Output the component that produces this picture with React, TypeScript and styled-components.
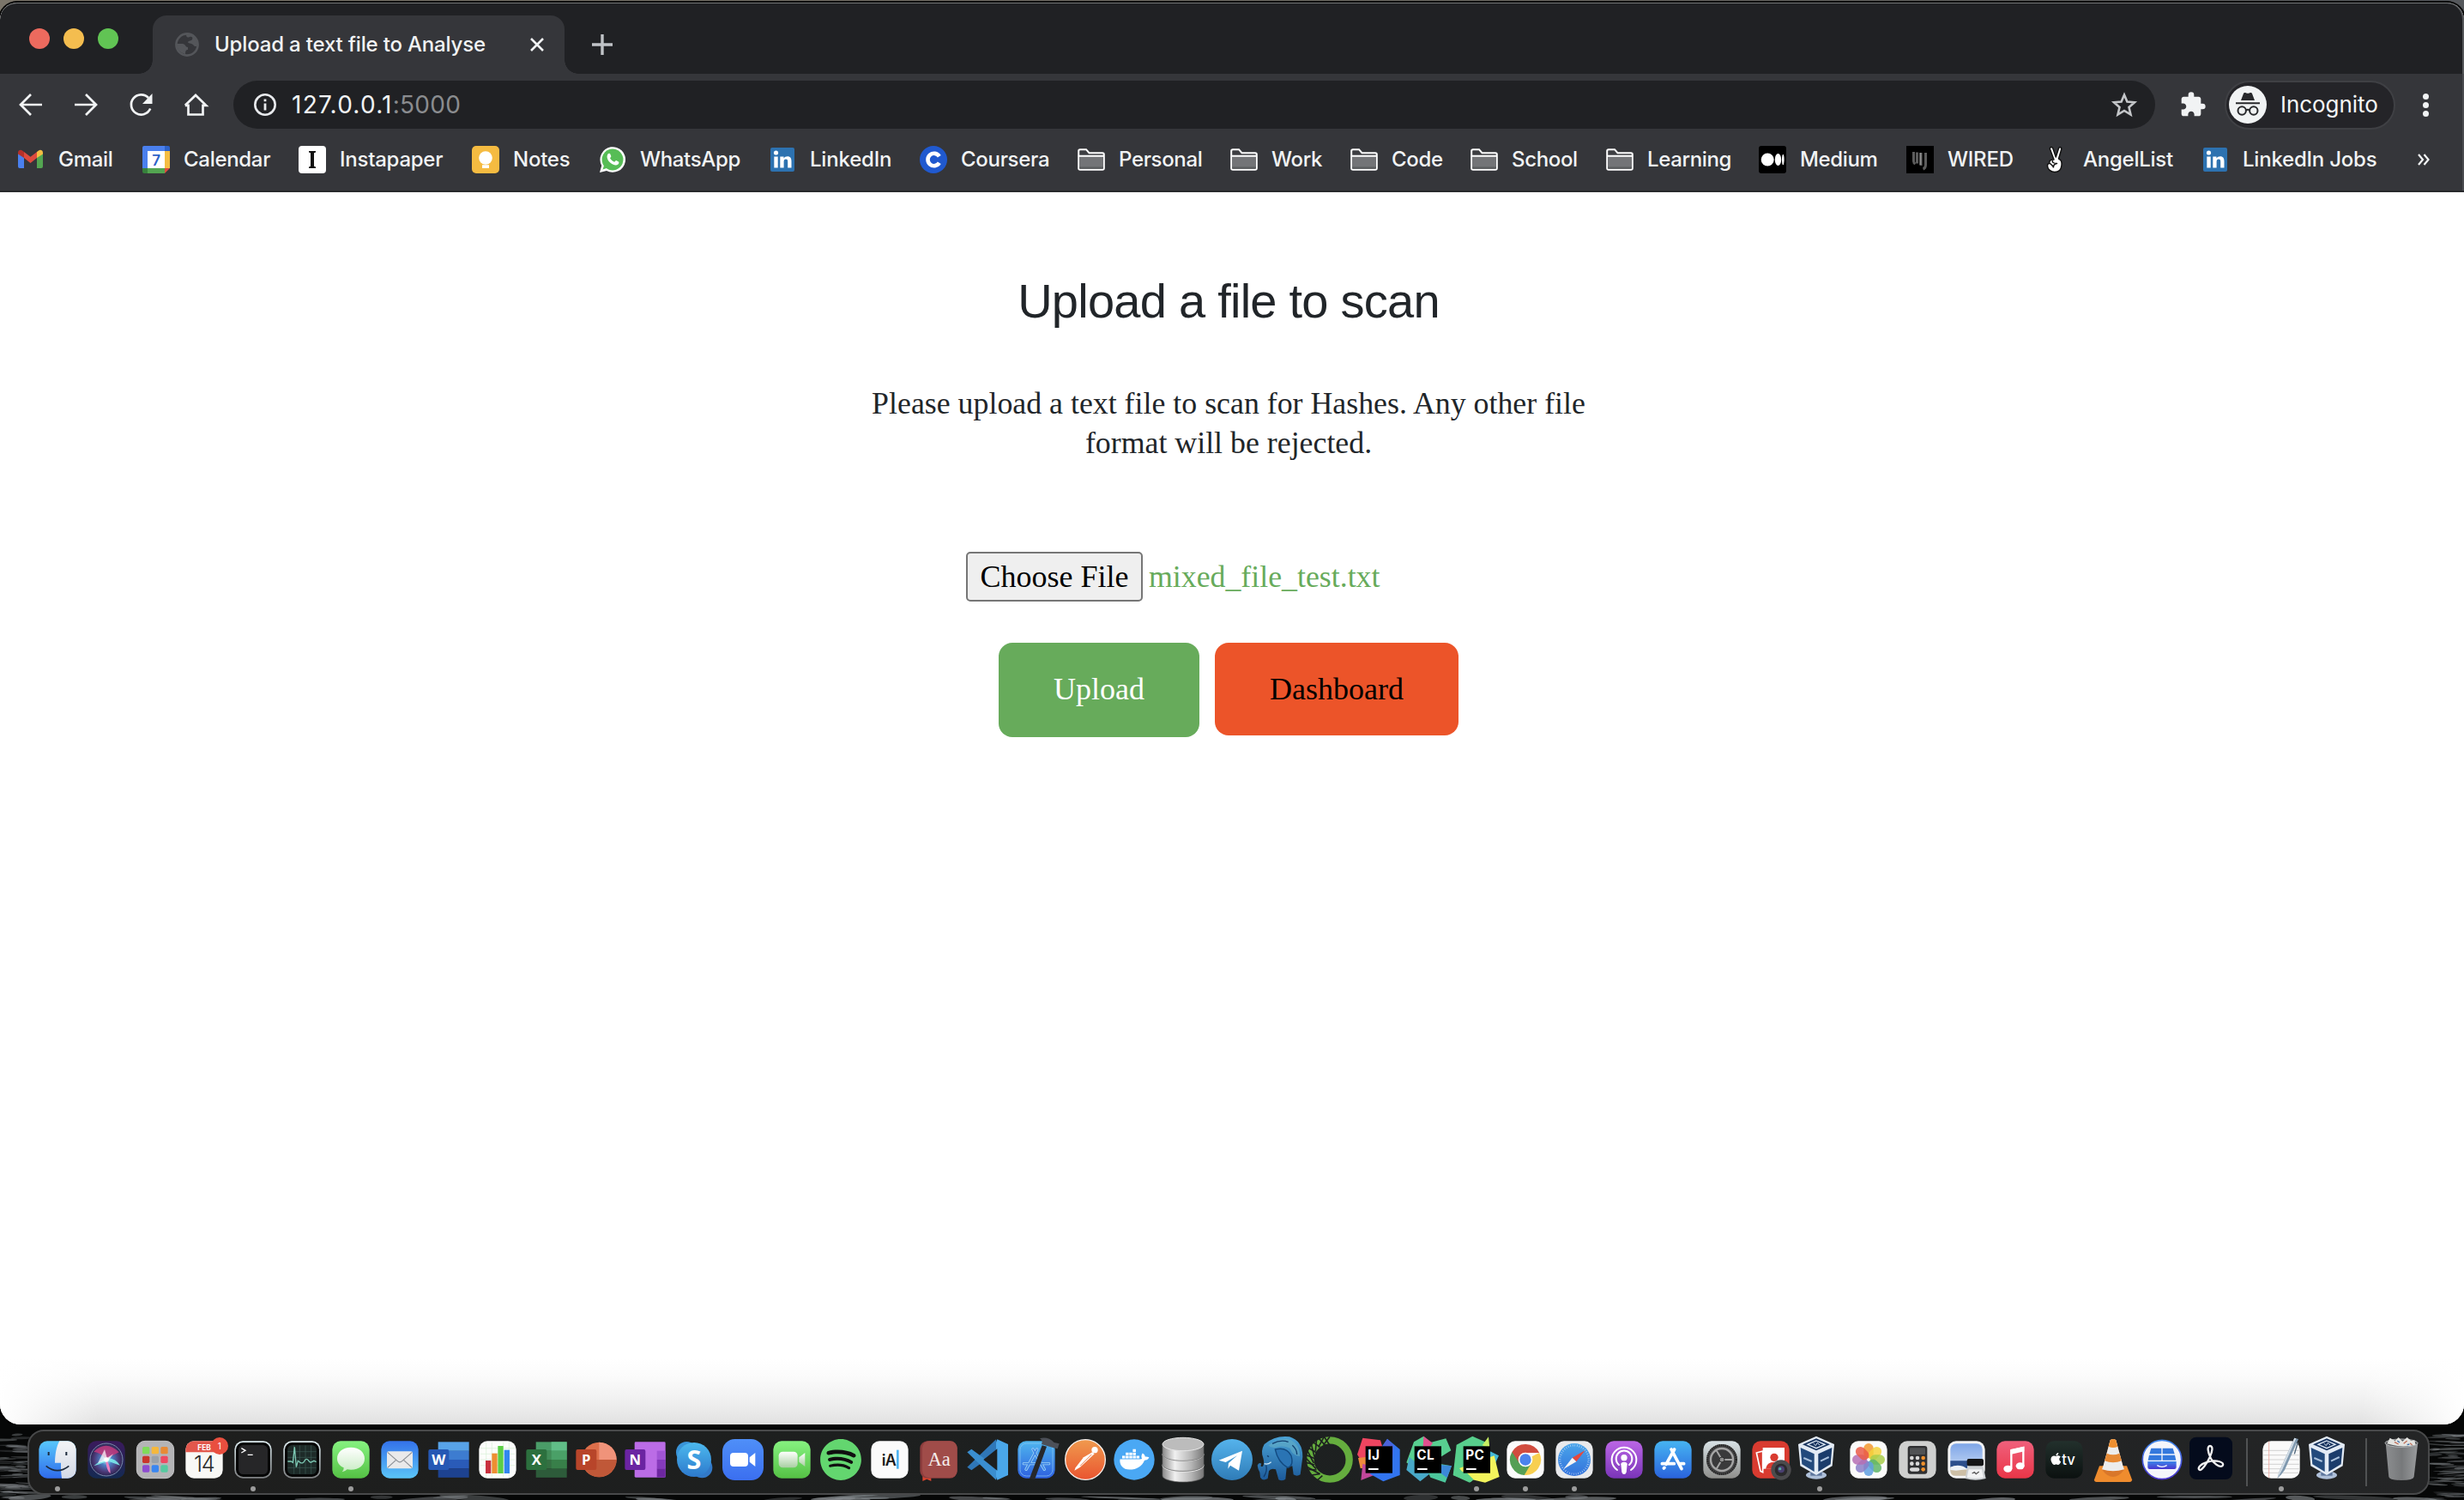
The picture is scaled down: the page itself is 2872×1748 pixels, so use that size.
import React from 'react';
import styled, { createGlobalStyle } from 'styled-components';
import { FaApple, FaDocker, FaSpotify } from 'react-icons/fa';

const GlobalStyle = createGlobalStyle`
  * { box-sizing: border-box; }
  html, body { margin: 0; padding: 0; background: #060707; }
  body { width: 2872px; height: 1748px; overflow: hidden; }
`;

const UI = `Inter, "Liberation Sans", sans-serif`;
const SERIF = `"Liberation Serif", "Times New Roman", serif`;

/* ------------------------------------------------------------------ */
/* Layout                                                              */
/* ------------------------------------------------------------------ */

const Desktop = styled.div`
  position: relative;
  isolation: isolate;
  width: 2872px;
  height: 1748px;
  padding-top: 3px;
  display: flex;
  flex-direction: column;
  overflow: hidden;
  background: linear-gradient(90deg, #7b756a, #6d6a63 60%, #55585c) 0 0 / 100% 40px no-repeat, #060707;
`;

const Window = styled.div`
  height: 1657px;
  flex: none;
  display: flex;
  flex-direction: column;
  border-radius: 20px 20px 24px 24px;
  overflow: hidden;
  background: #fff;
  box-shadow: 0 0 0 2px #000;
`;

const TabStrip = styled.div`
  height: 83px;
  flex: none;
  display: flex;
  align-items: flex-end;
  background: #202124;
  border-radius: 20px 20px 0 0;
  box-shadow: inset 0 2px 0 -1px #77797b, inset -2px 0 0 #55575a;
`;

const Lights = styled.div`
  display: flex;
  gap: 16px;
  width: 178px;
  padding-left: 34px;
  padding-bottom: 29px;
`;

const Light = styled.span<{ $color: string }>`
  width: 24px;
  height: 24px;
  border-radius: 50%;
  background: ${(p) => p.$color};
`;

const Tab = styled.div`
  position: relative;
  width: 480px;
  height: 68px;
  padding: 0 24px 0 26px;
  display: flex;
  align-items: center;
  background: #35363a;
  border-radius: 16px 16px 0 0;
  &::before,
  &::after {
    content: '';
    position: absolute;
    bottom: 0;
    width: 16px;
    height: 16px;
  }
  &::before {
    left: -16px;
    background: radial-gradient(circle at 0 0, transparent 15.5px, #35363a 16px);
  }
  &::after {
    right: -16px;
    background: radial-gradient(circle at 100% 0, transparent 15.5px, #35363a 16px);
  }
`;

const TabTitle = styled.span`
  flex: 1;
  margin-left: 18px;
  font: 500 24px/32px ${UI};
  letter-spacing: -0.17px;
  color: #f1f3f4;
  white-space: nowrap;
`;

const NewTab = styled.div`
  height: 68px;
  padding-left: 32px;
  display: flex;
  align-items: center;
`;

const Toolbar = styled.div`
  height: 72px;
  flex: none;
  display: flex;
  align-items: center;
  padding-left: 18px;
  background: #35363a;
  box-shadow: inset -2px 0 0 #4b4c50;
`;

const NavButtons = styled.div`
  display: flex;
  gap: 28px;
  width: 254px;
`;

const AddressBar = styled.div`
  width: 2240px;
  height: 56px;
  padding: 0 20px 0 24px;
  display: flex;
  align-items: center;
  border-radius: 28px;
  background: #202124;
`;

const Url = styled.span`
  flex: 1;
  margin-left: 18px;
  font: 400 28px/36px ${UI};
  letter-spacing: 1.25px;
  color: #f1f3f4;
`;

const Port = styled.span`
  letter-spacing: 0.25px;
  color: #8a8c8f;
`;

const Extensions = styled.div`
  width: 81px;
  padding-left: 28px;
  display: flex;
`;

const Incognito = styled.div`
  width: 199px;
  height: 57px;
  padding-left: 3px;
  display: flex;
  align-items: center;
  border: 2px solid #3f4044;
  border-radius: 29px;
  background: #242428;
  font: 400 26px/34px ${UI};
  letter-spacing: -0.05px;
  color: #f5f6f7;
  svg { margin-right: 16px; }
`;

const Menu = styled.div`
  margin-left: 32px;
  display: flex;
  flex-direction: column;
  gap: 3px;
`;

const MenuDot = styled.span`
  width: 7px;
  height: 7px;
  border-radius: 50%;
  background: #f1f3f4;
`;

const Bookmarks = styled.div`
  height: 66px;
  flex: none;
  padding: 0 0 8px 20px;
  display: flex;
  align-items: center;
  background: #35363a;
  border-bottom: 2px solid #28292c;
  box-shadow: inset -2px 0 0 #4b4c50;
`;

const Bookmark = styled.div<{ $width: number; $track: number }>`
  width: ${(p) => p.$width}px;
  flex: none;
  display: flex;
  align-items: center;
  gap: 16px;
  font: 500 24px/32px ${UI};
  letter-spacing: ${(p) => p.$track}px;
  color: #f1f3f4;
  white-space: nowrap;
`;

const Page = styled.main`
  flex: 1;
  padding: 93px 8px 0 0;
  display: flex;
  flex-direction: column;
  align-items: center;
  background:
    linear-gradient(90deg, #fff, rgba(255, 255, 255, 0) 120px, rgba(255, 255, 255, 0) calc(100% - 120px), #fff),
    linear-gradient(#fff calc(100% - 76px), #fbfbfb calc(100% - 56px), #f1f1f1 calc(100% - 30px), #e1e1e1);
  color: #212529;
`;

const Heading = styled.h1`
  margin: 0 0 62px;
  font: 400 56px/68px 'Liberation Sans', Arial, sans-serif;
  letter-spacing: -0.75px;
`;

const Lead = styled.p`
  margin: 0 0 104px;
  width: 850px;
  text-align: center;
  font: 400 35.850px/46px ${SERIF};
`;

const FileRow = styled.div`
  width: 612px;
  margin-bottom: 48px;
  display: flex;
  align-items: center;
  gap: 7px;
  font: 400 35.800px/42px ${SERIF};
  color: #67ab5b;
`;

const ChooseFile = styled.button`
  width: 206px;
  height: 58px;
  padding: 0;
  border: 2px solid #767676;
  border-radius: 5px;
  background: #efefef;
  color: #000;
  font: 400 36px/42px ${SERIF};
  white-space: nowrap;
`;

const Actions = styled.div`
  display: flex;
  align-items: flex-start;
  gap: 18px;
`;

const Action = styled.button<{ $bg: string; $fg: string; $w: number; $h: number }>`
  width: ${(p) => p.$w}px;
  height: ${(p) => p.$h}px;
  padding: 33px 0 0;
  display: flex;
  align-items: flex-start;
  justify-content: center;
  border: 0;
  border-radius: 16px;
  background: ${(p) => p.$bg};
  color: ${(p) => p.$fg};
  font: 400 36px/42px ${SERIF};
`;

const DockStrip = styled.footer`
  position: relative;
  height: 88px;
  padding: 6px 0 0 32px;
`;

const Waves = styled.svg`
  position: absolute;
  left: 0;
  top: -24px;
  z-index: -1;
`;

const Dock = styled.div`
  position: relative;
  width: 2800px;
  height: 76px;
  padding-left: 4.500px;
  display: flex;
  border: 2px solid #48494a;
  border-radius: 19px;
  background: linear-gradient(90deg, #1e1e1d, #1d2020 50%, #242526);
`;

const DockCell = styled.div`
  width: 57.050px;
  flex: none;
  display: flex;
  flex-direction: column;
  align-items: center;
  padding-top: 6px;
  svg { overflow: visible; flex: none; }
`;

const Running = styled.span`
  width: 6px;
  height: 6px;
  margin-top: 4px;
  border-radius: 50%;
  background: #9c9c9c;
`;

const Separator = styled.div`
  width: 2px;
  height: 56px;
  margin: 8px 10.900px 0 12.400px;
  flex: none;
  background: #505253;
`;

/* ------------------------------------------------------------------ */
/* Toolbar and bookmark icons                                          */
/* ------------------------------------------------------------------ */

const Globe = () => (
  <svg width="28" height="28" viewBox="0 0 28 28">
    <circle cx="14" cy="14" r="12.600" fill="none" stroke="#54565a" strokeWidth="2.600" />
    <path d="M2 13h7c3 0 3 4 6 4v3c-2 0-3 1-3 5-6-1-10-6-10-12zM13 2c0 4 2 4 4 3 3-1 4 1 3 3-1 2-4 1-5 3 0 2 4 1 6 3 1 2 4 3 5 1 1-7-4-13-13-13z" fill="#54565a" />
  </svg>
);

const NavIcon = ({ children }: { children: React.ReactNode }) => (
  <svg width="36" height="36" viewBox="0 0 36 36" fill="none" stroke="#f1f3f4" strokeWidth="2.700">
    {children}
  </svg>
);

const Folder = () => (
  <svg width="32" height="26" viewBox="0 0 32 26">
    <path d="M1.200 22V3q0-1.800 1.800-1.800h7l3.500 4H29q1.800 0 1.800 1.800v16q0 1.800-1.800 1.800H3q-1.800 0-1.800-1.800z" fill="#3d3e42" stroke="#fff" strokeWidth="2" />
    <path d="M2 9h28v13H2z" fill="#737477" />
    <path d="M2 21.500h28v2H2z" fill="#5b5c5f" />
    <path d="M2 8.700h28" stroke="#fff" strokeWidth="2" />
  </svg>
);

const LinkedIn = () => (
  <svg width="32" height="32" viewBox="0 0 32 32">
    <rect x="2" y="2" width="28" height="28" rx="2" fill="#2d72b0" />
    <circle cx="8.500" cy="8" r="2.600" fill="#fff" />
    <path d="M6.300 12.500h4.400v13H6.300zM13.300 12.500h4.200v1.900c1-1.500 2.500-2.200 4.300-2.200 3.600 0 4.700 2.200 4.700 5.800v7.500h-4.300v-7c0-1.700-.4-3-2.200-3-1.700 0-2.400 1.200-2.400 3v7h-4.300z" fill="#fff" />
  </svg>
);

const Gmail = () => (
  <svg width="32" height="32" viewBox="0 0 32 32">
    <path d="M1 8v16q0 2 2 2h5V13z" fill="#4a80ee" />
    <path d="M30 8v16q0 2-2 2h-5V13z" fill="#53a551" />
    <path d="M8 14V7l7.500 5.800L23 7v7l-7.500 6z" fill="#dd4b3e" />
    <path d="M1 8c0-3 3-4 5-2.600L8 7v7L1 9.500z" fill="#b5312a" />
    <path d="M30 8c0-3-3-4-5-2.600L23 7v7l7-4.500z" fill="#f4bd42" />
  </svg>
);

const GCalendar = () => (
  <svg width="32" height="32" viewBox="0 0 32 32">
    <path d="M2 0h24v6H6v20H0V2q0-2 2-2z" fill="#4a80ee" />
    <path d="M26 0h4q2 0 2 2v4h-6z" fill="#2d62c8" />
    <path d="M26 6h6v20h-6z" fill="#f4bd42" />
    <path d="M6 26h20v6H6z" fill="#53a551" />
    <path d="M0 26h6v6H2q-2 0-2-2z" fill="#37813c" />
    <path d="M26 26h6l-6 6z" fill="#dd4b3e" />
    <path d="M6 6h20v20H6z" fill="#fff" />
    <text x="16" y="22.500" textAnchor="middle" fontFamily={UI} fontSize="17" fontWeight="600" fill="#2d62c8">7</text>
  </svg>
);

const Instapaper = () => (
  <svg width="32" height="32" viewBox="0 0 32 32">
    <rect width="32" height="32" rx="4" fill="#fff" />
    <path d="M12 6h8v1.500l-2 .7v15.600l2 .7V26h-8v-1.500l2-.7V8.200l-2-.7z" fill="#111" />
  </svg>
);

const Keep = () => (
  <svg width="32" height="32" viewBox="0 0 32 32">
    <rect width="32" height="32" rx="5" fill="#f5bb41" />
    <circle cx="16" cy="14" r="7.800" fill="#fff" />
    <path d="M12 17h8v3.500h-8zM12 22.300h8V26h-8z" fill="#fff" />
  </svg>
);

const WhatsApp = () => (
  <svg width="32" height="32" viewBox="0 0 32 32">
    <path d="M1 31l2.200-8A14.800 14.800 0 1 1 9 28.900z" fill="#fff" />
    <circle cx="16" cy="16" r="12.400" fill="#57bd56" />
    <path d="M4.500 27.500l2-6 4 4z" fill="#57bd56" />
    <path d="M10.500 9.500c1-1.200 2.400-1 2.800 0l1 2.500c.2.800-.9 1.600-1.300 2.200 1.300 2.300 3 3.800 5.200 4.600.7-.5 1.300-1.900 2.100-1.700l2.700 1.300c.8.500.3 2.400-.6 3.200-2.200 1.900-5.500.9-8.600-1.500-2.900-2.400-5.700-6.900-3.300-10.600z" fill="#fff" />
  </svg>
);

const Coursera = () => (
  <svg width="32" height="32" viewBox="0 0 32 32">
    <circle cx="16" cy="16" r="16" fill="#2059cf" />
    <path d="M22.800 12.200A7.200 7.200 0 1 0 22.800 19.800" fill="none" stroke="#fff" strokeWidth="4.600" />
  </svg>
);

const Medium = () => (
  <svg width="32" height="32" viewBox="0 0 32 32">
    <rect width="32" height="32" rx="3" fill="#000" />
    <circle cx="10.200" cy="16" r="7.500" fill="#fff" />
    <ellipse cx="22.500" cy="16" rx="3.700" ry="7" fill="#fff" />
    <ellipse cx="28.300" cy="16" rx="1.300" ry="6.300" fill="#fff" />
  </svg>
);

const Wired = () => (
  <svg width="32" height="32" viewBox="0 0 32 32">
    <rect width="32" height="32" fill="#000" />
    <path d="M8.500 7v11q0 2 2 3M12.500 7.500v13M17 8v15M22.500 8v14q0 4-3 5" fill="none" stroke="#5c5c5c" strokeWidth="3" />
    <path d="M16.500 8v14" stroke="#8c8c8c" strokeWidth="2" />
  </svg>
);

const AngelList = () => (
  <svg width="32" height="32" viewBox="0 0 32 32" fill="#fff" stroke="#111" strokeWidth="1.500" strokeLinejoin="round">
    <path d="M14 16L9.500 4c-.8-2.600 2.400-3.600 3.400-1l3.400 10L19.500 3c.8-2.400 4-1.500 3.200 1.200L19.500 15c3 1 4 3.500 3.500 7.500-.5 5-3.500 8-8 8S6.500 27 6.500 23.500c0-2 1-3.500 2.500-3-1-2 .5-5 5-4.500z" />
    <path d="M9 20.500c2 0 3 3 4.500 4M12.500 17c-1 2 1 3.500 5 3.500-3 .5-4.500 2.500-4 5" fill="none" />
  </svg>
);

const IncognitoIcon = () => (
  <svg width="44" height="44" viewBox="0 0 44 44">
    <circle cx="22" cy="22" r="22" fill="#f1f3f4" />
    <path d="M14 17l3-8q.6-1.500 2.200-.9l1.800.6q1 .3 2 0l1.800-.6q1.600-.6 2.200.9l3 8z" fill="#28292c" />
    <path d="M8 20.200h28" stroke="#28292c" strokeWidth="2" />
    <g fill="none" stroke="#28292c" strokeWidth="2">
      <circle cx="15.200" cy="29" r="4.700" />
      <circle cx="28.800" cy="29" r="4.700" />
      <path d="M19.900 28.500q2.100-1.500 4.200 0" />
    </g>
  </svg>
);

const bookmarks: { label: string; w: number; track: number; icon: React.ReactNode }[] = [
  { label: 'Gmail', w: 146, track: -0.3, icon: <Gmail /> },
  { label: 'Calendar', w: 182, track: -0.3, icon: <GCalendar /> },
  { label: 'Instapaper', w: 202, track: -0.25, icon: <Instapaper /> },
  { label: 'Notes', w: 148, track: -0.25, icon: <Keep /> },
  { label: 'WhatsApp', w: 198, track: -0.35, icon: <WhatsApp /> },
  { label: 'LinkedIn', w: 176, track: -0.2, icon: <LinkedIn /> },
  { label: 'Coursera', w: 184, track: -0.3, icon: <Coursera /> },
  { label: 'Personal', w: 178, track: -0.35, icon: <Folder /> },
  { label: 'Work', w: 140, track: -0.35, icon: <Folder /> },
  { label: 'Code', w: 140, track: -0.35, icon: <Folder /> },
  { label: 'School', w: 158, track: -0.35, icon: <Folder /> },
  { label: 'Learning', w: 178, track: -0.35, icon: <Folder /> },
  { label: 'Medium', w: 172, track: -0.35, icon: <Medium /> },
  { label: 'WIRED', w: 158, track: -0.25, icon: <Wired /> },
  { label: 'AngelList', w: 186, track: -0.25, icon: <AngelList /> },
  { label: 'LinkedIn Jobs', w: 252, track: -0.22, icon: <LinkedIn /> },
];

/* ------------------------------------------------------------------ */
/* Dock icons: every drawing is centred on 0,0 in a 162-unit box       */
/* ------------------------------------------------------------------ */

const Tile = ({ fill, stroke }: { fill: string; stroke?: string }) => (
  <rect x="-65" y="-65" width="130" height="130" rx="29" fill={fill} stroke={stroke} strokeWidth={stroke ? 3 : 0} />
);

const Grad = ({ id, a, b, h }: { id: string; a: string; b: string; h?: boolean }) => (
  <linearGradient id={id} x1="0" y1="0" x2={h ? 1 : 0} y2={h ? 0 : 1}>
    <stop offset="0" stopColor={a} />
    <stop offset="1" stopColor={b} />
  </linearGradient>
);

const Finder = (
  <>
    <Grad id="fi" a="#58c8fb" b="#2f6bec" />
    <Grad id="fr" a="#f3f4f6" b="#d3d9e6" />
    <Tile fill="url(#fi)" />
    <path d="M7-65H36a29 29 0 0 1 29 29V36a29 29 0 0 1-29 29H15C12 45 12 30 12 11H-9C-8-20-4-45 7-65z" fill="url(#fr)" />
    <path d="M-31-27v12M31-27v12" stroke="#1d2a3c" strokeWidth="6" />
    <path d="M-40 22Q0 54 40 22" fill="none" stroke="#1d2a3c" strokeWidth="5" />
  </>
);

const Siri = (
  <>
    <Grad id="si" a="#3a1a5c" b="#142a52" />
    <radialGradient id="so">
      <stop offset="0" stopColor="#c8fff8" />
      <stop offset=".35" stopColor="#4b7fc4" />
      <stop offset=".75" stopColor="#4c3a78" />
      <stop offset="1" stopColor="#2a2450" />
    </radialGradient>
    <Tile fill="url(#si)" />
    <circle r="57" fill="url(#so)" stroke="#7d8db0" strokeWidth="3" />
    <path d="M-44-28Q0-70 44-26Q20-14 0-2Q-20-24-44-28z" fill="#c23a7c" opacity=".85" />
    <path d="M-44 22Q-24 4 0-4Q30-8 48 20Q22 12 4 4Q-4 10-44 22z" fill="#7ff2f0" opacity=".85" />
    <path d="M0 0Q14 20 14 48Q2 40-2 8z" fill="#ee7fc0" />
    <circle r="8" fill="#fff" />
    <path d="M-6-36L2-6L24-20L8 2L-30 12z" fill="#fff" opacity=".7" />
  </>
);

const launchColors = ['#7fdc5a', '#f5b83d', '#e88b35', '#c9362c', '#9aa1a8', '#ee4a62', '#8d4bd0', '#3a86f0', '#56c9a0'];
const Launchpad = (
  <>
    <Tile fill="#b4b4b6" stroke="#c6c6c8" />
    {launchColors.map((c, i) => (
      <rect key={c} x={-45 + (i % 3) * 32} y={-45 + Math.floor(i / 3) * 32} width="25" height="25" rx="5" fill={c} />
    ))}
  </>
);

const Calendar = (
  <>
    <Tile fill="#f8f8f5" />
    <path d="M-65-26v-10a29 29 0 0 1 29-29h72a29 29 0 0 1 29 29v10z" fill="#e2574c" />
    <text x="0" y="-34" textAnchor="middle" fontFamily={UI} fontWeight="700" fontSize="25" fill="#fff">FEB</text>
    <text x="-1" y="43" textAnchor="middle" fontFamily={UI} fontWeight="300" fontSize="76" letterSpacing="-4" fill="#2a2a2a">14</text>
    <circle cx="54" cy="-48" r="30" fill="#e94f3f" />
    <text x="53" y="-37" textAnchor="middle" fontFamily={UI} fontSize="30" fill="#fff">1</text>
  </>
);

const Terminal = (
  <>
    <Grad id="te" a="#dfeef2" b="#7d8082" />
    <Tile fill="url(#te)" />
    <rect x="-60" y="-60" width="120" height="120" rx="25" fill="#050505" />
    <rect x="-51" y="-51" width="102" height="102" rx="16" fill="#262628" />
    <path d="M-41-40l14 8-14 8M-19-17h18" fill="none" stroke="#fff" strokeWidth="4" />
  </>
);

const Activity = (
  <>
    <Tile fill="url(#te)" />
    <rect x="-60" y="-60" width="120" height="120" rx="25" fill="#050505" />
    <rect x="-51" y="-51" width="102" height="102" rx="16" fill="#1d2a28" />
    <path d="M-28-50V50M-8-50V50M12-50V50M32-50V50M-50-28H50M-50-8H50M-50 28H50" stroke="#3d5a55" strokeWidth="2" />
    <path d="M-50 6h12l6 4 6-54 6 70 6-22 8 6q10 6 16-8 6-8 12 0 6 10 12 6l8-4 8 4" fill="none" stroke="#7cc7b2" strokeWidth="4" />
  </>
);

const Messages = (
  <>
    <Grad id="me" a="#86f280" b="#55c145" />
    <Grad id="mb" a="#ffffff" b="#c9ecc4" />
    <Tile fill="url(#me)" />
    <path d="M0-43c30 0 48 17 48 39S30 35 0 35q-8 0-13-1-8 8-18 9 7-6 6-15C-40 21-48 10-48-4c0-22 18-39 48-39z" fill="url(#mb)" />
  </>
);

const Mail = (
  <>
    <Grad id="ma" a="#3472ea" b="#5bc5f8" />
    <Tile fill="url(#ma)" />
    <rect x="-45" y="-29" width="90" height="60" rx="6" fill="#e9e9ea" />
    <path d="M-43-26L-8 5q8 7 16 0L43-26M-43 28L-14 2M43 28L14 2" fill="none" stroke="#8b8f95" strokeWidth="3.500" />
  </>
);

const OfficeTab = ({ letter, fill }: { letter: string; fill: string }) => (
  <>
    <rect x="-71" y="-36" width="72" height="72" rx="6" fill={fill} />
    <text x="-35" y="19" textAnchor="middle" fontFamily='"Open Sans", sans-serif' fontWeight="700" fontSize="50" fill="#fff">{letter}</text>
  </>
);

const Bands = ({ colors }: { colors: string[] }) => (
  <>
    {colors.map((c, i) => (
      <rect key={c} x="-37" y={-62 + i * 31} width="108" height="31.500" fill={c} />
    ))}
  </>
);

const Word = (
  <>
    <Bands colors={['#58a3e8', '#3d7cd0', '#2a5bb8', '#1d4290']} />
    <OfficeTab letter="W" fill="#2558b4" />
  </>
);

const Numbers = (
  <>
    <Tile fill="#fcfdfb" />
    <path d="M-40-60V60M-20-60V60M20-60V60M40-60V60M-60-40H60M-60-20H60M-60 0H60M-60 20H60" stroke="#d8f0d6" strokeWidth="2" />
    <rect x="-42" y="3" width="19" height="45" fill="#c9313f" />
    <rect x="-20" y="-22" width="19" height="70" fill="#ed8f32" />
    <rect x="1" y="-48" width="19" height="96" fill="#5bcf46" />
    <rect x="23" y="-34" width="19" height="82" fill="#3288ee" />
  </>
);

const Excel = (
  <>
    <Bands colors={['#4a9c68', '#418b57', '#356f42', '#2d5b3a']} />
    <path d="M17-62H71V-31H17z" fill="#61bd88" />
    <path d="M17-31H71V0H17z" fill="#4aa067" />
    <path d="M17 0H71V31H17z" fill="#387f49" />
    <OfficeTab letter="X" fill="#2c703e" />
  </>
);

const PowerPoint = (
  <>
    <circle cx="10" r="61" fill="#dd6f4b" />
    <path d="M10 0V-61A61 61 0 0 1 71 0z" fill="#f0937a" />
    <path d="M71 0A61 61 0 0 1-51 0z" fill="#c05838" />
    <OfficeTab letter="P" fill="#b8452a" />
  </>
);

const OneNote = (
  <>
    <rect x="-37" y="-62" width="108" height="124" rx="4" fill="#bb6ce6" />
    <path d="M41-31H71V0H41z" fill="#a154d4" />
    <path d="M41 0H71V31H41z" fill="#853abb" />
    <path d="M41 31H71V62H41z" fill="#6d27a0" />
    <OfficeTab letter="N" fill="#6b24a2" />
  </>
);

const Skype = (
  <>
    <Grad id="sk" a="#4cb9ee" b="#2d79cc" />
    <circle cx="-26" cy="-26" r="37" fill="#3994d8" />
    <circle cx="28" cy="28" r="36" fill="#3279c8" />
    <circle r="60" fill="url(#sk)" />
    <text x="0" y="33" textAnchor="middle" fontFamily='"Open Sans", sans-serif' fontWeight="700" fontSize="92" fill="#fff">S</text>
  </>
);

const Zoom = (
  <>
    <Grad id="zo" a="#4f8ff8" b="#3b6ff0" />
    <rect x="-72" y="-72" width="144" height="144" rx="44" fill="url(#zo)" />
    <rect x="-45" y="-24" width="63" height="48" rx="12" fill="#fff" />
    <path d="M23-8L43-24V24L23 8z" fill="#fff" />
  </>
);

const FaceTime = (
  <>
    <Grad id="fc" a="#fdfffc" b="#a9cfa2" />
    <Tile fill="url(#me)" />
    <rect x="-46" y="-28" width="66" height="56" rx="14" fill="url(#fc)" />
    <path d="M25-8L46-24V24L25 8z" fill="url(#fc)" />
  </>
);

const Spotify = (
  <>
    <circle r="68" fill="#101010" />
    <FaSpotify x={-74} y={-74} size={148} color="#63d66f" />
  </>
);

const IaWriter = (
  <>
    <Tile fill="#fbfbfb" />
    <text x="-28" y="20" fontFamily={UI} fontWeight="600" fontSize="54" letterSpacing="-2" fill="#1a1a1a">iA</text>
    <rect x="24" y="-34" width="8" height="66" fill="#4fb4f2" />
  </>
);

const Dictionary = (
  <>
    <path d="M-56 60h30v15l-15-7-15 7z" fill="#d9442f" />
    <rect x="-65" y="-65" width="130" height="130" rx="26" fill="#8e3d3d" />
    <rect x="-57" y="-65" width="122" height="128" rx="24" fill="#a04c49" />
    <text x="2" y="20" textAnchor="middle" fontFamily={SERIF} fontSize="68" fill="#f4eceb">Aa</text>
  </>
);

const VSCode = (
  <>
    <path d="M-71 26L30-71 38-30-56 37z" fill="#2f77b8" />
    <path d="M-71-26L-56-37 38 32 30 71z" fill="#3a8ed0" />
    <path d="M34-71L72-54V54L34 71 30 60V-60z" fill="#4aa7ea" />
    <path d="M34-38V38L-14 0z" fill="#1d1f1f" />
  </>
);

const Xcode = (
  <>
    <Grad id="xc" a="#4fb6ee" b="#2d60e0" />
    <Tile fill="url(#xc)" />
    <rect x="-57" y="-57" width="114" height="114" rx="22" fill="none" stroke="#8dcaf5" strokeWidth="3" opacity=".7" />
    <g stroke="#9fd3f8" strokeWidth="10" fill="none" strokeLinecap="round">
      <path d="M2-36L-36 34M-12-36L28 34M-44 14H44" />
    </g>
    <g stroke="#3f86e4" strokeWidth="5" fill="none" strokeLinecap="round">
      <path d="M2-36L-36 34M-12-36L28 34M-44 14H44" />
    </g>
    <path d="M20-50L36-46-6 70-24 66z" fill="#26282c" />
    <path d="M12-74Q40-82 62-60L80-56 74-38 58-42 18-54Q24-66 12-74z" fill="#4c5058" />
  </>
);

const Postman = (
  <>
    <Grad id="po" a="#f09a4e" b="#ea5530" />
    <circle r="70" fill="url(#po)" stroke="#f7f2ee" strokeWidth="4" />
    <circle cx="33" cy="-34" r="11" fill="#fff" />
    <path d="M24-26L32-20-18 26-38 38-34 28-6-8z" fill="#fff" />
    <path d="M-18 22L22-18" stroke="#ee7a45" strokeWidth="3" />
  </>
);

const Docker = (
  <>
    <circle r="71" fill="#4aa8f4" />
    <FaDocker x={-50} y={-52} size={102} color="#fff" />
  </>
);

const Database = (
  <>
    <linearGradient id="db">
      <stop offset="0" stopColor="#8a8a8a" />
      <stop offset=".3" stopColor="#f0f0f0" />
      <stop offset=".7" stopColor="#b5b5b5" />
      <stop offset="1" stopColor="#777" />
    </linearGradient>
    {[28, -10, -46].map((y) => (
      <g key={y}>
        <path d={`M-72 ${y - 8}V${y + 28}a72 22 0 0 0 144 0V${y - 8}z`} fill="url(#db)" stroke="#666" strokeWidth="2" />
        <ellipse cy={y - 8} rx="72" ry="23" fill="#bcbcbc" stroke="#e6e6e6" strokeWidth="3" />
      </g>
    ))}
  </>
);

const Telegram = (
  <>
    <Grad id="tg" a="#55b3ec" b="#2f7cb8" />
    <circle r="72" fill="url(#tg)" />
    <path d="M-46 2L36-31 24 38-6 20-14 32-12 12 18-14-22 9z" fill="#fff" />
  </>
);

const Elephant = (
  <>
    <Grad id="el" a="#4ba3d6" b="#1c5a9a" />
    <path d="M-58-54Q-20-86 30-80Q76-66 76-10L68 52Q56 60 44 52L40 22 20 28 16 68Q4 76-8 70L-18 34Q-36 28-42 40L-46 66Q-64 76-72 62L-74 44Q-80 36-82 20Q-78 8-68 14Q-74 26-64 24-56 16-62-6Q-72-30-58-54z" fill="url(#el)" />
    <path d="M-20-36Q20-46 36-14Q46 20 24 28Q-10 10-20-36z" fill="#2a74b4" stroke="#134a80" strokeWidth="4" />
    <path d="M-44-50Q-10-76 26-72Q66-58 66-12Q40-14 32-40Q4-52-20-42Q-36-40-44-50z" fill="#5fa9c4" opacity=".7" />
    <path d="M-30-56Q0-72 26-62M40-50Q56-36 56-18M-52 20Q-46 40-60 60M-48-14l6 4" fill="none" stroke="#123f70" strokeWidth="4" />
    <path d="M-34 8Q-46 18-58 14" stroke="#cfe8f6" strokeWidth="4" fill="none" />
  </>
);

const Anaconda = (
  <>
    <circle r="68" fill="none" stroke="#65ad3e" strokeWidth="25" />
    <g stroke="#1d2020" strokeWidth="5" fill="none">
      <path d="M-20-80L0-50M-40-76L-16-50M-60-62L-34-44M-72-40L-46-24M-82-16L-52-4M-82 10L-54 18M-74 34L-46 36M-62 54L-36 50M-44 72L-26 56" />
      <path d="M0-80L-22-52M-20-80L-40-44M-46-76L-50-30M-66-60L-54-10M-80-34L-56 12M-84-6L-48 32M-82 24L-34 50" />
    </g>
  </>
);

interface JetProps { letters: string; children: React.ReactNode; }
const JetBrains = ({ letters, children }: JetProps) => (
  <>
    {children}
    <rect x="-46" y="-47" width="94" height="94" fill="#000" />
    <text x="-38" y="-1" fontFamily={UI} fontWeight="700" fontSize="46" letterSpacing="1" fill="#fff">{letters}</text>
    <rect x="-36" y="30" width="35" height="6" fill="#fff" />
  </>
);

const IntelliJ = (
  <JetBrains letters="IJ">
    <path d="M-56-76L6-68 20-20-60 6-75-18z" fill="#ee4560" />
    <path d="M-72-6L-40-10-30 30-64 30z" fill="#ee8a3c" />
    <path d="M-56 14L20 40-62 72z" fill="#c2479b" />
    <path d="M30-73L74-36V54L16 76-30 50 0-30z" fill="#3275f0" />
    <path d="M30-73L52-50 48 0 10-40z" fill="#4c62d8" />
  </JetBrains>
);

const CLion = (
  <JetBrains letters="CL">
    <path d="M-48-62L-14-82 10-60 64-74 82-32 46-10V40L-60 20-74 10z" fill="#58cf90" />
    <path d="M-14-82L18-58 4-40-16-46z" fill="#e0508f" />
    <path d="M-64-10L-74 36-26 76 20 40-30 20z" fill="#48a9c8" />
    <path d="M0 40L40 14 84 22 62 80 10 62z" fill="#4cc79c" />
    <path d="M46 18L84 22 68 64 44 46z" fill="#3c88d8" />
  </JetBrains>
);

const PyCharm = (
  <JetBrains letters="PC">
    <path d="M-70-52L-14-82 30-62 40 20-20 78-82 54z" fill="#57cf8c" />
    <path d="M20-50L42-80 46-40z" fill="#c7f063" />
    <path d="M46-30L78-14 62 20 40 10z" fill="#45b8d6" />
    <path d="M-60 30L62-14 80 60 30 80-30 66z" fill="#f3f45c" />
    <path d="M-82 54L-40 40-10 70-24 80z" fill="#57cf8c" />
  </JetBrains>
);

const Chrome = (
  <>
    <Tile fill="#fbfbfb" />
    <path d="M0 0L-46.800-27A54 54 0 0 0 0 54z" fill="#559f55" />
    <path d="M0 0L48.500-24A54 54 0 0 1-4 54z" fill="#f8cf50" />
    <path d="M-46.800-27A54 54 0 0 1 48.500-24H0L-21 12z" fill="#d14c3f" />
    <path d="M-4 54L21 12H-21L-12 50z" fill="#559f55" />
    <circle r="25" fill="#fff" />
    <circle r="20" fill="#4b83ec" />
  </>
);

const Safari = (
  <>
    <Grad id="sf" a="#4aa5ea" b="#3272dc" />
    <Tile fill="#e9eaec" />
    <circle r="57" fill="url(#sf)" />
    <circle r="50" fill="none" stroke="#d7e9fa" strokeWidth="7" strokeDasharray="2 5.850" opacity=".8" />
    <path d="M38-33L7 7-7-7z" fill="#e5483d" />
    <path d="M-38 33L-7-7 7 7z" fill="#f5f5f5" />
  </>
);

const Podcasts = (
  <>
    <Grad id="pd" a="#bb66e6" b="#7a35b8" />
    <Tile fill="url(#pd)" />
    <g fill="none" stroke="#fff" strokeWidth="6" strokeLinecap="round">
      <path d="M-24 36A43 43 0 1 1 24 36" />
      <path d="M-18 18A28 28 0 1 1 18 18" />
    </g>
    <circle cy="-7" r="11" fill="#fff" />
    <path d="M-11 16q0-8 11-8t11 8l-3 28q-2 7-8 7t-8-7z" fill="#fff" />
  </>
);

const AppStore = (
  <>
    <Grad id="as" a="#46b4f2" b="#2a63dc" />
    <Tile fill="url(#as)" />
    <g stroke="#fff" strokeWidth="11" strokeLinecap="round">
      <path d="M5-36L-24 16M-6-36L30 32M-38 14H4M26 14H38M-32 30L-30 28" />
    </g>
  </>
);

const Settings = (
  <>
    <Grad id="se" a="#d8e2e6" b="#8f8f8c" />
    <Tile fill="url(#se)" />
    <circle r="54" fill="#4b4b4c" />
    <circle r="50" fill="none" stroke="#262626" strokeWidth="8" strokeDasharray="4 3" />
    <circle r="39" fill="#3a3a3b" stroke="#a5a5a5" strokeWidth="7" />
    <path d="M0 0L38 0M0 0L-20-34M0 0L-20 34" stroke="#a5a5a5" strokeWidth="6" />
    <circle r="9" fill="#8c8c8c" stroke="#2a2a2a" strokeWidth="3" />
  </>
);

const PhotoBooth = (
  <>
    <Tile fill="#d93b30" />
    <path d="M-50-24L-28-30V44L-36 40z" fill="none" stroke="#fff" strokeWidth="5" />
    <rect x="-28" y="-42" width="76" height="74" fill="#fff" />
    <circle cx="12" cy="-8" r="14" fill="#d93b30" />
    <path d="M-18 32q4-24 30-24t30 24z" fill="#d93b30" />
    <circle cx="36" cy="36" r="35" fill="#4b4b4d" />
    <circle cx="36" cy="36" r="22" fill="#2a2a2c" />
    <circle cx="36" cy="34" r="12" fill="#4a3f70" />
    <circle cx="32" cy="32" r="5" fill="#58b0a0" />
  </>
);

const VirtualBox = (
  <g transform="translate(-12 0)">
    <ellipse cy="54" rx="36" ry="14" fill="#aebfd8" />
    <path d="M-20 40h40v16h-40z" fill="#5d759c" />
    <path d="M0-82L63-54L56 22L0 54-56 22L-63-54z" fill="#e3ebf5" />
    <path d="M0-74L48-53 0-32-48-53z" fill="#17335e" />
    <path d="M0-66L30-53 0-40-30-53z" fill="none" stroke="#dbe6f2" strokeWidth="4" />
    <path d="M-10-57l8 8 6-10 8 8" fill="none" stroke="#dbe6f2" strokeWidth="3" />
    <path d="M-55-42L-7-20V42L-50 16z" fill="#234a7c" />
    <path d="M55-42L7-20V42L50 16z" fill="#1b3c6b" />
    <path d="M-44-6L-16 6M15 5L44-9" stroke="#a9c0dc" strokeWidth="6" />
  </g>
);

const petals = ['#f3992f', '#f3d23c', '#a8cc4a', '#5fb567', '#5f9fe0', '#8a7fc8', '#b56fb4', '#ea5a48'];
const Photos = (
  <>
    <Tile fill="#fbfbfb" />
    {petals.map((c, i) => (
      <rect key={c} x="-17" y="-57" width="34" height="52" rx="17" fill={c} opacity=".85" transform={`rotate(${i * 45})`} />
    ))}
  </>
);

const Calculator = (
  <>
    <Tile fill="#cfd0cf" />
    <rect x="-34" y="-48" width="68" height="98" rx="9" fill="#2f3032" />
    <rect x="-27" y="-41" width="54" height="23" rx="3" fill="#505254" />
    {[-6, 14].map((y) => (
      <g key={y}>
        <circle cx="-20" cy={y} r="7" fill="#d9d9d9" />
        <circle cx="0" cy={y} r="7" fill="#d9d9d9" />
        <circle cx="20" cy={y} r="7" fill="#f0912c" />
      </g>
    ))}
    <rect x="-27" y="28" width="34" height="13" rx="6.500" fill="#d9d9d9" />
    <circle cx="20" cy="34" r="7" fill="#f0912c" />
  </>
);

const Preview = (
  <>
    <Grad id="pv" a="#7fa6e8" b="#d4e3f6" />
    <Tile fill="#f4f4f4" />
    <rect x="-56" y="-56" width="112" height="112" rx="20" fill="url(#pv)" />
    <path d="M-56 4H56V30H-56z" fill="#2c4f8c" />
    <path d="M-56 26Q-30 18-6 30T56 24V38Q56 56 38 56H-38Q-56 56-56 38z" fill="#cdbfa6" />
    <path d="M-56 26Q-30 14-6 26l10 8-40 4-20-2z" fill="#eef3f8" />
    <path d="M4 20H58L68 66Q32 76-4 66z" fill="#cdd1d4" />
    <path d="M8 34H54L60 62Q30 68 2 62z" fill="#f1f2f3" />
    <rect x="2" y="-3" width="58" height="25" rx="6" fill="#151617" />
    <path d="M20 48l8-4 6 6 10-8" stroke="#555" strokeWidth="4" fill="none" />
  </>
);

const Music = (
  <>
    <Grad id="mu" a="#f0607c" b="#ea3648" />
    <Tile fill="url(#mu)" />
    <path d="M-14 32V-32L28-42V22" fill="none" stroke="#fff" strokeWidth="7" />
    <path d="M-17-36L31-46V-29L-17-18z" fill="#fff" />
    <ellipse cx="-26" cy="32" rx="15" ry="12" fill="#fff" />
    <ellipse cx="17" cy="22" rx="15" ry="12" fill="#fff" />
  </>
);

const AppleTV = (
  <>
    <Grad id="tv" a="#22302c" b="#0b1110" />
    <Tile fill="url(#tv)" />
    <FaApple x={-53} y={-27} size={48} color="#fff" />
    <text x="-8" y="18" fontFamily={UI} fontSize="50" fontWeight="500" fill="#fff">tv</text>
  </>
);

const Vlc = (
  <>
    <path d="M-48 22H48L66 70Q66 78 58 78H-58Q-66 78-66 70z" fill="#ef8c2e" />
    <path d="M-38 36L-10-68Q0-76 10-68L38 36Q20 60 0 60T-38 36z" fill="#d9772a" />
    <path d="M-34 20L-10-68Q0-76 10-68L34 20 39 34Q0 46-39 34z" fill="#ececec" />
    <path d="M-16-46L-10-68Q0-76 10-68L16-46Q0-38-16-46z" fill="#ee8f30" />
    <path d="M-22-22Q0-12 22-22L30 4Q0 16-30 4z" fill="#e78a35" />
  </>
);

const FileDrawer = (
  <>
    <Grad id="fd" a="#3d86ea" b="#4a35d0" />
    <circle r="68" fill="#f4f6fb" stroke="url(#fd)" strokeWidth="5" />
    <path d="M-38-40H-2V-20H-44zM2-40H38L44-20H2zM-45-16H-2V2H-49zM2-16H45L49 2H2z" fill="#3378dd" />
    <path d="M-50 6H50V26Q50 33 43 33H-43Q-50 33-50 26z" fill="url(#fd)" />
    <path d="M-17 20Q0 30 17 20" fill="none" stroke="#fff" strokeWidth="4" />
  </>
);

const Acrobat = (
  <>
    <rect x="-75" y="-79" width="150" height="148" rx="24" fill="#040b1c" />
    <path d="M-3-48C-14-48-12-28 0-4C8 12 30 28 40 22C52 10 20-2-12 8C-34 15-46 26-42 34C-34 44-12 10-4-8C6-30 8-48-3-48z" fill="none" stroke="#f1f1f1" strokeWidth="7" />
  </>
);

const TextEdit = (
  <>
    <Tile fill="#fafafa" />
    <path d="M-62-32H62M-62-16H62M-62 0H62M-62 16H62M-62 32H62M-62 46H62" stroke="#c9c9c9" strokeWidth="2.500" />
    <path d="M-43-64V64" stroke="#eaa39b" strokeWidth="2.500" />
    <path d="M46-76L60-72 12 36 0 52-14 66-8 44-2 30z" fill="#7f98ae" />
    <path d="M46-76L52-74 4 34-14 66-8 44z" fill="#d3dde6" />
    <path d="M58-60l-12 40" stroke="#4d6478" strokeWidth="4" />
  </>
);

const Trash = (
  <>
    <linearGradient id="tr">
      <stop offset="0" stopColor="#8c8e90" />
      <stop offset=".5" stopColor="#77797b" />
      <stop offset="1" stopColor="#9a9c9e" />
    </linearGradient>
    <path d="M-55-60L-44 60Q-42 72 0 72T44 60L58-60z" fill="url(#tr)" />
    <ellipse cy="-58" rx="57" ry="14" fill="#55585a" stroke="#b5b7b9" strokeWidth="3" />
    <path d="M-50-56L-40-76-22-66-10-78 4-64 20-78 34-66 46-68 50-52Q0-40-50-56z" fill="#e3e3e0" />
    <path d="M-24-62l14 8M8-56l12-10M30-58l8 6" stroke="#c0705a" strokeWidth="4" />
    <path d="M-14-66l8 6M20-52l8-2" stroke="#3b6fa8" strokeWidth="4" />
  </>
);

type DockEntry = { art: React.ReactNode; running?: boolean } | 'separator';

const dock: DockEntry[] = [
  { art: Finder, running: true }, { art: Siri }, { art: Launchpad }, { art: Calendar },
  { art: Terminal, running: true }, { art: Activity }, { art: Messages, running: true }, { art: Mail },
  { art: Word }, { art: Numbers }, { art: Excel }, { art: PowerPoint }, { art: OneNote }, { art: Skype },
  { art: Zoom }, { art: FaceTime }, { art: Spotify }, { art: IaWriter }, { art: Dictionary },
  { art: VSCode }, { art: Xcode }, { art: Postman }, { art: Docker }, { art: Database },
  { art: Telegram }, { art: Elephant }, { art: Anaconda }, { art: IntelliJ }, { art: CLion },
  { art: PyCharm, running: true }, { art: Chrome, running: true }, { art: Safari, running: true },
  { art: Podcasts }, { art: AppStore }, { art: Settings }, { art: PhotoBooth },
  { art: VirtualBox, running: true }, { art: Photos }, { art: Calculator }, { art: Preview },
  { art: Music }, { art: AppleTV }, { art: Vlc }, { art: FileDrawer }, { art: Acrobat },
  'separator', { art: TextEdit, running: true }, { art: VirtualBox }, 'separator', { art: Trash },
];

/* Light glints on the dark water of the wallpaper */
const glints = Array.from({ length: 150 }, (_, i) => {
  const r = (n: number) => {
    const v = Math.sin(i * 12.9898 + n * 78.233) * 43758.5453;
    return v - Math.floor(v);
  };
  const side = i % 3;
  const low = side === 0;
  return {
    x: low ? r(1) * 2872 : side === 1 ? r(1) * 34 : 2834 + r(1) * 40,
    y: low ? 108 + r(2) * 5 : 34 + r(2) * 78,
    w: low ? 10 + r(3) * 40 : 6 + r(3) * 16,
    h: low ? 1 + r(4) * 2.5 : 0.5 + r(4) * 1.1,
    o: low ? 0.25 + r(5) * 0.45 : 0.2 + r(5) * 0.3,
  };
});

export default function App() {
  return (
    <>
      <GlobalStyle />
      <Desktop>
        <Window>
          <TabStrip>
            <Lights>
              <Light $color="#ec6a5e" />
              <Light $color="#f4bd4f" />
              <Light $color="#61c454" />
            </Lights>
            <Tab>
              <Globe />
              <TabTitle>Upload a text file to Analyse</TabTitle>
              <svg width="16" height="16" viewBox="0 0 16 16">
                <path d="M1 1l14 14M15 1L1 15" stroke="#f1f3f4" strokeWidth="2.600" />
              </svg>
            </Tab>
            <NewTab>
              <svg width="24" height="24" viewBox="0 0 24 24">
                <path d="M12 0v24M0 12h24" stroke="#c0c3c7" strokeWidth="3.400" />
              </svg>
            </NewTab>
          </TabStrip>
          <Toolbar>
            <NavButtons>
              <NavIcon><path d="M31 18H7M18 6L6 18l12 12" /></NavIcon>
              <NavIcon><path d="M5 18h24M18 6l12 12-12 12" /></NavIcon>
              <NavIcon>
                <path d="M29.200 22.500A11.600 11.600 0 1 1 27 10" />
                <path d="M31.500 5v12H20z" fill="#f1f3f4" stroke="none" />
              </NavIcon>
              <NavIcon><path d="M9.500 17.500V29.500h17V17.500M5.800 18.800L18 7l12.200 11.800h-4M9.800 18.800h-4" /></NavIcon>
            </NavButtons>
            <AddressBar>
              <svg width="26" height="26" viewBox="0 0 26 26">
                <circle cx="13" cy="13" r="11.700" fill="none" stroke="#e8eaed" strokeWidth="2.600" />
                <path d="M13 6.500v2.800M13 11.500v8" stroke="#e8eaed" strokeWidth="2.800" />
              </svg>
              <Url>127.0.0.1<Port>:5000</Port></Url>
              <svg width="32" height="32" viewBox="0 0 32 32">
                <path d="M16 4.500l3.400 8 8.600.8-6.500 5.700 2 8.500L16 23l-7.500 4.500 2-8.500L4 13.300l8.600-.8z" fill="none" stroke="#c4c6c9" strokeWidth="2.600" />
              </svg>
            </AddressBar>
            <Extensions>
              <svg width="32" height="32" viewBox="0 0 24 24" fill="#f1f3f4">
                <path d="M20.500 11H19V7c0-1.100-.9-2-2-2h-4V3.500a2.500 2.500 0 0 0-5 0V5H4c-1.100 0-1.990.9-1.990 2v3.800H3.500c1.490 0 2.700 1.210 2.700 2.700s-1.210 2.700-2.700 2.700H2V20c0 1.100.9 2 2 2h3.800v-1.500c0-1.490 1.210-2.700 2.700-2.700s2.700 1.210 2.700 2.700V22H17c1.100 0 2-.9 2-2v-4h1.500a2.500 2.500 0 0 0 0-5z" />
              </svg>
            </Extensions>
            <Incognito>
              <IncognitoIcon />
              Incognito
            </Incognito>
            <Menu>
              <MenuDot />
              <MenuDot />
              <MenuDot />
            </Menu>
          </Toolbar>
          <Bookmarks>
            {bookmarks.map((b) => (
              <Bookmark key={b.label} $width={b.w} $track={b.track}>
                {b.icon}
                {b.label}
              </Bookmark>
            ))}
            <svg width="14" height="16" viewBox="0 0 14 16">
              <path d="M1 2l5 6-5 6M7.500 2l5 6-5 6" fill="none" stroke="#f1f3f4" strokeWidth="2.200" />
            </svg>
          </Bookmarks>
          <Page>
            <Heading>Upload a file to scan</Heading>
            <Lead>Please upload a text file to scan for Hashes. Any other file format will be rejected.</Lead>
            <FileRow>
              <ChooseFile>Choose File</ChooseFile>
              <span>mixed_file_test.txt</span>
            </FileRow>
            <Actions>
              <Action $bg="#67ab5b" $fg="#fff" $w={234} $h={110}>Upload</Action>
              <Action $bg="#ec5429" $fg="#000" $w={284} $h={108}>Dashboard</Action>
            </Actions>
          </Page>
        </Window>
        <DockStrip>
          <Waves width="2872" height="112" viewBox="0 0 2872 112">
            {glints.map((g, i) => (
              <ellipse key={i} cx={g.x} cy={g.y} rx={g.w} ry={g.h} fill="#8d9296" opacity={g.o} transform={`rotate(${(i % 5) * 2 - 4} ${g.x} ${g.y})`} />
            ))}
          </Waves>
          <Dock>
            {dock.map((d, i) =>
              d === 'separator' ? (
                <Separator key={i} />
              ) : (
                <DockCell key={i}>
                  <svg width="54" height="54" viewBox="-81 -81 162 162">{d.art}</svg>
                  {d.running && <Running />}
                </DockCell>
              ),
            )}
          </Dock>
        </DockStrip>
      </Desktop>
    </>
  );
}
